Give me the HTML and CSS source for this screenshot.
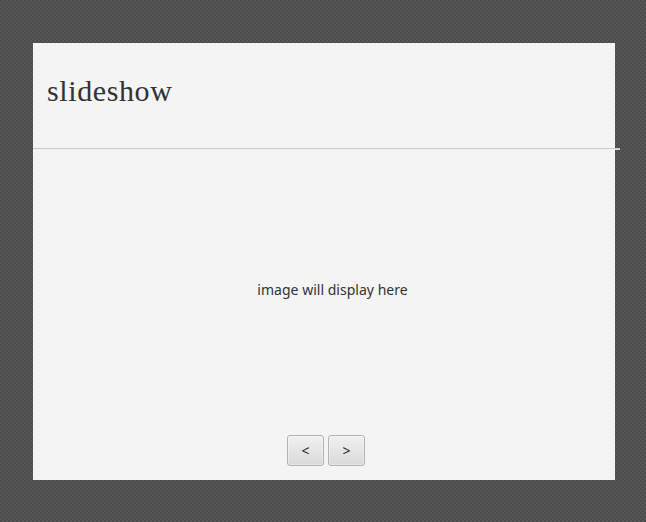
FILE: index.html
```html
<!DOCTYPE html>
<html lang="en">
<head>
<meta charset="utf-8">
<title>slideshow</title>
<link rel="stylesheet" href="styles.css">
</head>
<body>
<main class="panel">
  <h1 class="title">slideshow</h1>
  <hr class="rule">
  <div class="stage"><p class="message">image will display here</p></div>
  <div class="controls">
    <button class="btn" type="button">&lt;</button>
    <button class="btn" type="button">&gt;</button>
  </div>
</main>
</body>
</html>
```

FILE: styles.css
```css
* { box-sizing: border-box; }
body {
  margin: 0;
  height: 522px;
  padding: 43px 31px 42px 33px;
  overflow: hidden;
  background-color: #4b4b4b;
  background-image:
    conic-gradient(#575757 25%, transparent 0 50%, #575757 0 75%, transparent 0),
    conic-gradient(#484848 25%, #4d4d4d 0 50%, #484848 0 75%, #4d4d4d 0);
  background-size: 4px 4px, 2px 2px;
}
.panel {
  display: flex;
  flex-direction: column;
  width: 582px;
  height: 437px;
  background: #f4f4f4;
}
.title {
  flex: none;
  height: 105px;
  margin: 0;
  padding: 28px 14px 0;
  font: 400 30px/40px "Palatino Linotype", Palatino, "Liberation Serif", serif;
  letter-spacing: 0.6px;
  color: #333;
}
.rule {
  flex: none;
  width: 587px;
  height: 2px;
  margin: 0;
  border: 0;
  border-top: 1px solid #ccc;
  background: #ddd;
  background: linear-gradient(90deg, #f0f0f0 582px, #d8d8d8 0);
}
.stage {
  flex: 1;
  padding: 130px 0 0 17px;
  text-align: center;
}
.message {
  margin: 0;
  font: 14px/20px "Segoe UI", "Noto Sans", "Open Sans", sans-serif;
  letter-spacing: 0.02px;
  color: #333;
}
.controls {
  display: flex;
  gap: 4px;
  padding: 0 0 14px 254px;
}
.btn {
  width: 37px;
  height: 31px;
  padding: 1px 0 0;
  border: 1px solid #b3b3b3;
  border-radius: 3px;
  background: linear-gradient(#f0f0f0, #dadada);
  box-shadow: inset 0 0 0 1px rgba(255, 255, 255, .3);
  font: 14px/20px "Segoe UI", "Noto Sans", sans-serif;
  color: #222;
}
```
